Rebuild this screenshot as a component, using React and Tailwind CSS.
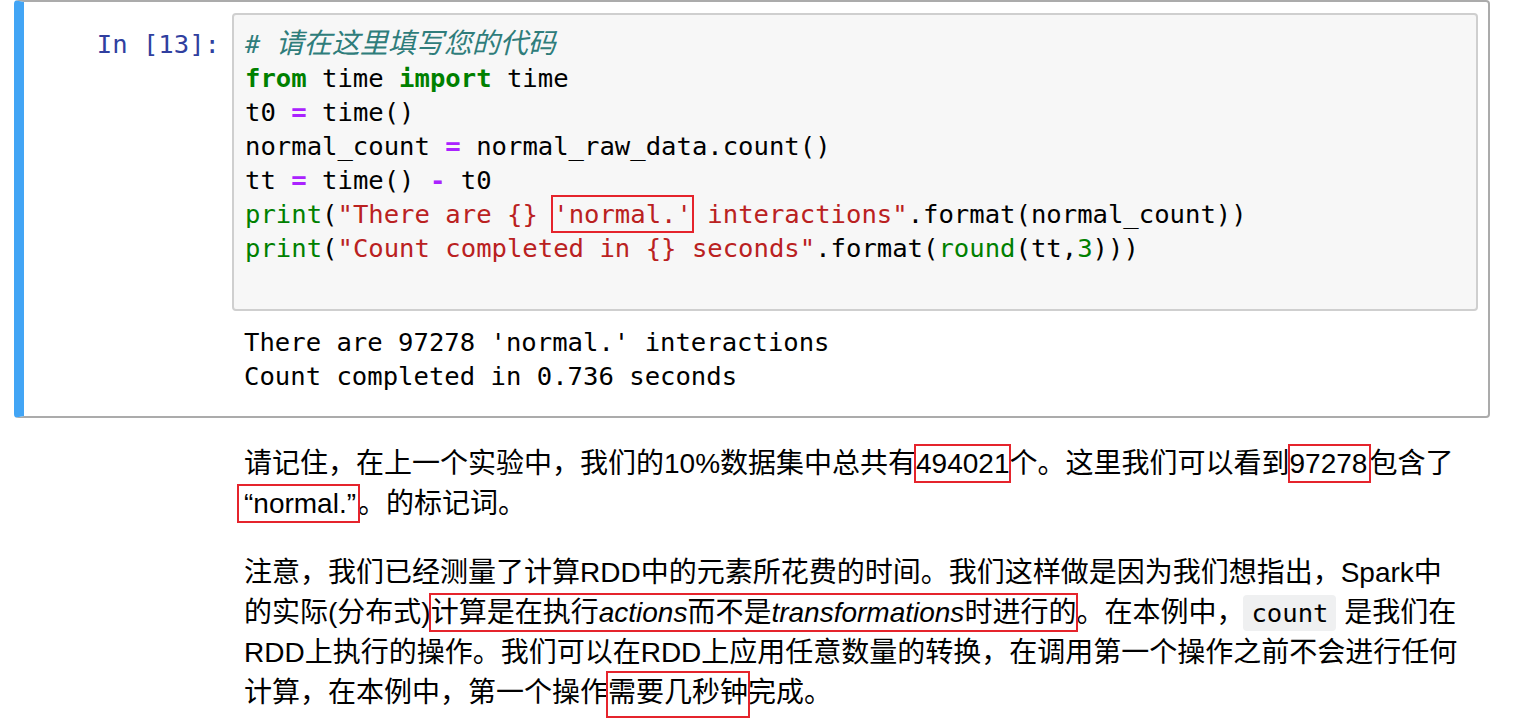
import React from 'react';

const mono = "font-['DejaVu_Sans_Mono','Noto_Sans_CJK_SC',monospace]";
const sans = "font-['Liberation_Sans','Noto_Sans_CJK_SC',sans-serif]";

// token helpers
const Kw = ({ children }) => <span className="text-[#008000] font-bold">{children}</span>;
const Op = ({ children }) => <span className="text-[#aa22ff] font-bold">{children}</span>;
const Str = ({ children }) => <span className="text-[#ba2121]">{children}</span>;
const Bi = ({ children }) => <span className="text-[#008000]">{children}</span>;
const Num = ({ children }) => <span className="text-[#008000]">{children}</span>;

// red annotation box drawn over text
const Mark = ({ children, className = '' }) => (
  <span className={`outline-2 outline-[#e5242c] ${className}`}>{children}</span>
);

function CodeLine({ children }) {
  return <div className="h-[34px] leading-[34px] whitespace-pre">{children}</div>;
}

function CodeCell() {
  return (
    <div className="ml-[14px] w-[1476px] border-2 border-[#ababab] border-l-[10px] border-l-[#42a5f5] rounded-[4px] pt-[11px] pb-[23px]">
      <div className="flex">
        <div className={`w-[208px] shrink-0 pt-[14px] pr-[12px] text-right text-[25.6px] leading-[34px] text-[#303f9f] ${mono}`}>
          In [13]:
        </div>
        <div className="w-[1246px]">
          <div className={`bg-[#f7f7f7] border-2 border-[#cfcfcf] rounded-[4px] pt-[12px] pb-[10px] pl-[11px] text-[25.6px] text-black ${mono}`}>
            <CodeLine>
              <span className="text-[#2f7d7b] italic">
                # <span className="text-[28px]">请在这里填写您的代码</span>
              </span>
            </CodeLine>
            <CodeLine>
              <Kw>from</Kw> time <Kw>import</Kw> time
            </CodeLine>
            <CodeLine>
              t0 <Op>=</Op> time()
            </CodeLine>
            <CodeLine>
              normal_count <Op>=</Op> normal_raw_data.count()
            </CodeLine>
            <CodeLine>
              tt <Op>=</Op> time() <Op>-</Op> t0
            </CodeLine>
            <CodeLine>
              <Bi>print</Bi>(<Str>"There are {'{}'} </Str>
              <Mark className="py-[2px]"><Str>'normal.'</Str></Mark>
              <Str> interactions"</Str>.format(normal_count))
            </CodeLine>
            <CodeLine>
              <Bi>print</Bi>(<Str>"Count completed in {'{}'} seconds"</Str>.format(<Bi>round</Bi>(tt,<Num>3</Num>)))
            </CodeLine>
            <CodeLine>{' '}</CodeLine>
          </div>
          <div className={`mt-[14px] pl-[12px] text-[25.6px] leading-[34px] text-black whitespace-pre ${mono}`}>
            <div>There are 97278 'normal.' interactions</div>
            <div>Count completed in 0.736 seconds</div>
          </div>
        </div>
      </div>
    </div>
  );
}

function MarkdownCell() {
  return (
    <div className={`pl-[244px] pt-[26px] text-[28px] leading-[40px] text-black whitespace-nowrap ${sans}`}>
      <p>
        请记住，在上一个实验中，我们的10%数据集中总共有<Mark className="py-[2px]">494021</Mark>个。这里我们可以看到<Mark className="py-[2px] pr-[2px]">97278</Mark>包含了
        <br />
        <Mark className="py-[2px] pl-[5px] pr-[2px] -ml-[5px]">“normal.”</Mark>。的标记词。
      </p>
      <p className="mt-[29px]">
        注意，我们已经测量了计算RDD中的元素所花费的时间。我们这样做是因为我们想指出，Spark中
        <br />
        的实际(分布式)
        <Mark className="py-[2px]">
          计算是在执行<em>actions</em>而不是<em>transformations</em>时进行的
        </Mark>
        。在本例中，
        <code className={`ml-[-1px] bg-[#eff0f1] rounded-[4px] px-[8px] py-[3px] text-[25.6px] ${mono}`}>count</code>
        {' '}是我们在
        <br />
        RDD上执行的操作。我们可以在RDD上应用任意数量的转换，在调用第一个操作之前不会进行任何
        <br />
        计算，在本例中，第一个操作<Mark className="pt-[4px] pb-[8px]">需要几秒钟</Mark>完成。
      </p>
    </div>
  );
}

export default function App() {
  return (
    <div className="w-[1514px] h-[719px] bg-white overflow-hidden">
      <CodeCell />
      <MarkdownCell />
    </div>
  );
}
